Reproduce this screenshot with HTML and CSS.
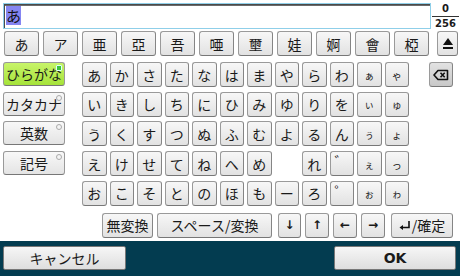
FILE: index.html
```html
<!DOCTYPE html>
<html lang="ja">
<head>
  <meta charset="UTF-8" />
  <meta name="viewport" content="width=device-width, initial-scale=1.0" />
  <title>文字入力</title>
  <link rel="stylesheet" href="styles.css">
</head>
<body>
  <div class="screen">
    <div class="top">
      <div class="field"><span class="sel">あ</span></div>
      <div class="count"><span class="num">0</span><span class="max">256</span></div>
    </div>

    <div class="cands">
      <div class="key cand">あ</div>
      <div class="key cand">ア</div>
      <div class="key cand">亜</div>
      <div class="key cand">亞</div>
      <div class="key cand">吾</div>
      <div class="key cand">唖</div>
      <div class="key cand">壐</div>
      <div class="key cand">娃</div>
      <div class="key cand">婀</div>
      <div class="key cand">會</div>
      <div class="key cand">椏</div>
      <div class="key shift">
        <svg width="12" height="14" viewBox="0 0 12 14"><polygon points="6,1 11,8 1,8" fill="#111"/><rect x="1" y="10" width="10" height="2" fill="#111"/></svg>
      </div>
    </div>

    <div class="main">
      <div class="modes">
        <div class="mode on">ひらがな<span class="dot"></span></div>
        <div class="mode">カタカナ<span class="dot"></span></div>
        <div class="mode">英数<span class="dot"></span></div>
        <div class="mode">記号<span class="dot"></span></div>
      </div>

      <div class="kana">
        <div class="key">あ</div><div class="key">か</div><div class="key">さ</div><div class="key">た</div><div class="key">な</div><div class="key">は</div><div class="key">ま</div><div class="key">や</div><div class="key">ら</div><div class="key">わ</div><div class="key small">ぁ</div><div class="key small">ゃ</div>
        <div class="key">い</div><div class="key">き</div><div class="key">し</div><div class="key">ち</div><div class="key">に</div><div class="key">ひ</div><div class="key">み</div><div class="key">ゆ</div><div class="key">り</div><div class="key">を</div><div class="key small">ぃ</div><div class="key small">ゅ</div>
        <div class="key">う</div><div class="key">く</div><div class="key">す</div><div class="key">つ</div><div class="key">ぬ</div><div class="key">ふ</div><div class="key">む</div><div class="key">よ</div><div class="key">る</div><div class="key">ん</div><div class="key small">ぅ</div><div class="key small">ょ</div>
        <div class="key">え</div><div class="key">け</div><div class="key">せ</div><div class="key">て</div><div class="key">ね</div><div class="key">へ</div><div class="key">め</div><div class="gap"></div><div class="key">れ</div><div class="key mark">゛</div><div class="key small">ぇ</div><div class="key small">っ</div>
        <div class="key">お</div><div class="key">こ</div><div class="key">そ</div><div class="key">と</div><div class="key">の</div><div class="key">ほ</div><div class="key">も</div><div class="key">ー</div><div class="key">ろ</div><div class="key mark">゜</div><div class="key small">ぉ</div><div class="key small">ゎ</div>
      </div>

      <div class="side">
        <div class="key bs">
          <svg width="16" height="12" viewBox="0 0 16 12"><path d="M5 1.5 H14.5 V10.5 H5 L1 6 Z" fill="none" stroke="#111" stroke-width="1.6" stroke-linejoin="round"/><path d="M7.5 3.8 L11.7 8.2 M11.7 3.8 L7.5 8.2" stroke="#111" stroke-width="1.6"/></svg>
        </div>
      </div>
    </div>

    <div class="ops">
      <div class="key op muhen">無変換</div>
      <div class="key op space">スペース/変換</div>
      <div class="key op arrow down">↓</div>
      <div class="key op arrow">↑</div>
      <div class="key op arrow">←</div>
      <div class="key op arrow">→</div>
      <div class="key op enter">
        <svg width="12" height="11" viewBox="0 0 12 11"><path d="M10 1 V7.5 H3" fill="none" stroke="#111" stroke-width="1.6"/><polygon points="0.5,7.5 4,5 4,10" fill="#111"/></svg>/確定
      </div>
    </div>

    <div class="foot">
      <div class="fbtn">キャンセル</div>
      <div class="fbtn ok">OK</div>
    </div>
  </div>
</body>
</html>
```

FILE: styles.css
```css
body {
  margin: 0;
  background: #ffffff;
  font-family: "Noto Sans CJK JP", "DejaVu Sans", sans-serif;
  color: #1a1a1a;
}
.screen {
  width: 460px;
  height: 276px;
  overflow: hidden;
}
.top {
  display: flex;
  padding: 3px 0 0 3px;
  height: 26px;
}
.field {
  width: 428px;
  height: 26px;
  box-sizing: border-box;
  border: 1px solid #8fcfe9;
  box-shadow: inset 1px 1px 0 #4a4a4a, inset 0 2px 0 #6a6a6a;
  padding: 2px 0 0 2px;
  display: flex;
  align-items: flex-start;
}
.sel {
  display: inline-flex;
  align-items: center;
  justify-content: center;
  width: 15px;
  height: 19px;
  background: #8585f2;
  font-size: 15px;
  line-height: 1;
  color: #111;
}
.count {
  width: 27px;
  margin-left: 1px;
  display: flex;
  flex-direction: column;
  align-items: center;
  font-family: "DejaVu Sans", sans-serif;
  font-weight: bold;
  font-size: 10px;
  line-height: 1;
}
.num {
  padding: 1px 0 2px;
}
.max {
  width: 100%;
  text-align: center;
  border-top: 1px solid #333;
  padding-top: 2px;
}
.key {
  box-sizing: border-box;
  height: 25px;
  display: flex;
  align-items: center;
  justify-content: center;
  background: linear-gradient(#f7f7f7, #e2e2e2);
  border: 1px solid #9a9a9a;
  border-bottom-color: #777;
  border-right-color: #858585;
  border-radius: 3px;
  font-size: 14px;
  line-height: 1;
}
.cands {
  display: flex;
  gap: 4px;
  margin-top: 2px;
  padding-left: 4px;
}
.cand {
  width: 35px;
}
.shift {
  width: 21px;
  margin-left: 4px;
}
.main {
  display: flex;
  margin-top: 6px;
}
.modes {
  margin-left: 3px;
  width: 62px;
  display: flex;
  flex-direction: column;
  gap: 5.7px;
}
.mode {
  position: relative;
  box-sizing: border-box;
  height: 24px;
  display: flex;
  align-items: center;
  justify-content: center;
  background: linear-gradient(#f8f8f8, #e4e4e4);
  border: 1px solid #999;
  border-bottom-color: #777;
  border-radius: 3px;
  font-size: 14px;
  line-height: 1;
}
.mode.on {
  background: linear-gradient(#c8f46a, #a6e33a);
}
.dot {
  position: absolute;
  top: 2px;
  right: 2px;
  width: 4px;
  height: 4px;
  border: 1px solid #aaa;
  border-radius: 50%;
  background: #f4f4f4;
}
.mode.on .dot {
  border-radius: 1px;
  border-color: #dff;
  background: #3cc43c;
}
.kana {
  margin-left: 17px;
  display: grid;
  grid-template-columns: repeat(12, 24.5px);
  grid-auto-rows: 25px;
  gap: 4.7px 3px;
}
.kana .small {
  font-size: 10px;
  padding-top: 2px;
}
.kana .mark {
  align-items: flex-start;
  justify-content: flex-start;
  padding: 2px 0 0 4px;
}
.side {
  margin-left: 20px;
}
.bs {
  width: 24px;
  background: linear-gradient(#e2e2e2, #c8c8c8);
}
.ops {
  display: flex;
  gap: 4px;
  margin-top: 7px;
  padding-left: 102px;
}
.muhen {
  width: 51px;
}
.space {
  width: 115px;
}
.arrow {
  width: 24px;
  font-family: "DejaVu Sans", sans-serif;
  font-size: 12px;
  font-weight: bold;
}
.down {
  margin-left: 2px;
  width: 23px;
}
.enter {
  width: 62px;
  margin-left: 2px;
  gap: 1px;
}
.foot {
  margin-top: 3px;
  height: 35px;
  box-sizing: border-box;
  background: #033c50;
  padding: 5px 4px 0 3px;
  display: flex;
  justify-content: space-between;
}
.fbtn {
  box-sizing: border-box;
  width: 123px;
  height: 24px;
  display: flex;
  align-items: center;
  justify-content: center;
  background: linear-gradient(#f6f6f6, #dedede);
  border: 1px solid #777;
  border-radius: 2px;
  font-size: 14px;
  line-height: 1;
}
.ok {
  width: 122px;
  font-family: "DejaVu Sans", sans-serif;
  font-weight: bold;
}
```
